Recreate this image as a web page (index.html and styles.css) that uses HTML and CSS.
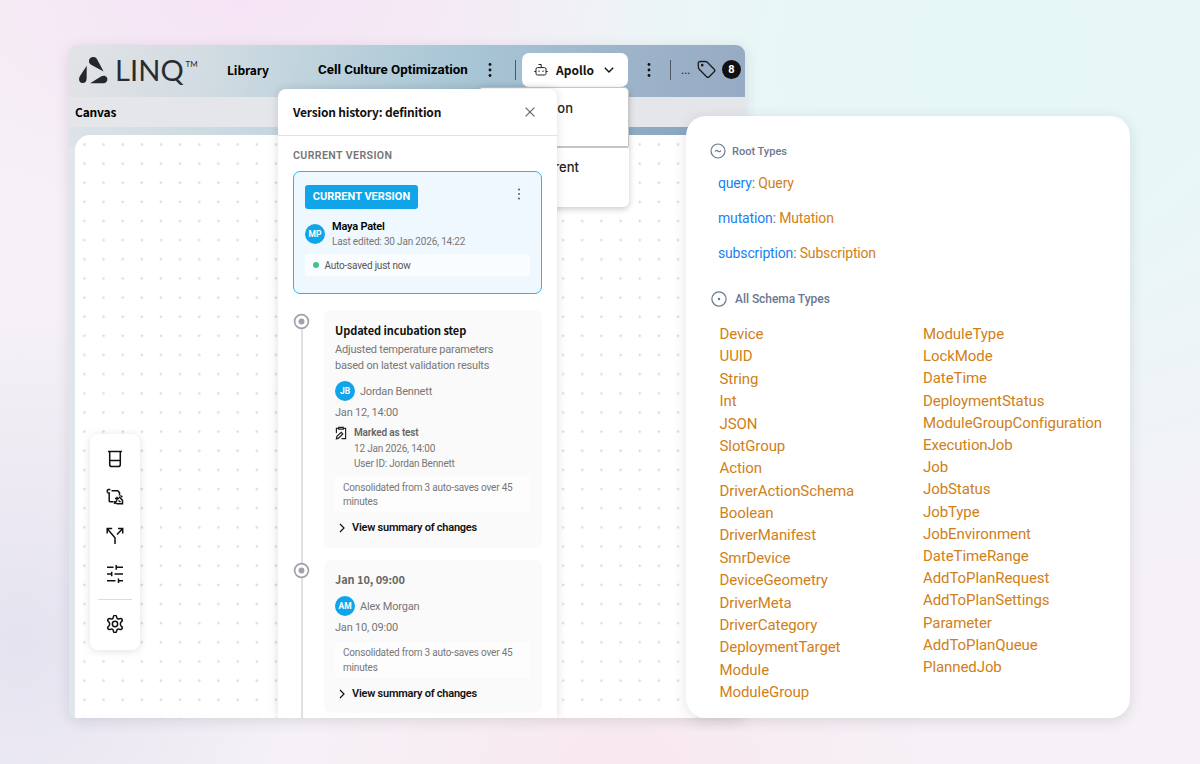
FILE: index.html
```html
<!DOCTYPE html>
<html lang="en">
<head>
<meta charset="utf-8">
<title>LINQ</title>
<link rel="stylesheet" href="styles.css">
</head>
<body>
<main class="stage">
  <section class="app">
    <header class="topbar">
      <svg class="logo-mark" viewBox="0 0 32 30" fill="#25282a"><path d="M10.300 4.500C10.500 1.500 13 .3 15.200.6c2 .3 3.200 1.400 4 3.300l6.200 11.600L12.500 8.500c-1.600-.9-2.400-2.300-2.200-4z"/><path d="M8 9.500l-.1 13.200c-.1 3-1.600 4.900-4.200 4.800C1.200 27.400-.1 25.300.1 23c.1-1.300.8-2.500 1.600-3.800z"/><path d="M11.500 27.700l11.200-6.900c2.200-1.300 4.900-1 6.100 1 1.300 2.300 0 5.600-3.200 5.900z"/></svg>
      <span class="logo-text">LINQ</span><span class="tm">TM</span>
      <span class="nav-library">Library</span>
      <span class="nav-title">Cell Culture Optimization</span>
      <svg class="kebab" viewBox="0 0 4 16"><circle cx="2" cy="2.500" r="1.400"/><circle cx="2" cy="8" r="1.400"/><circle cx="2" cy="13.500" r="1.400"/></svg>
      <i class="rule rule-a"></i>
      <button class="workcell">
        <svg viewBox="0 0 14 14" fill="none" stroke="#222" stroke-width="1"><path d="M4.500 1.500h2.700v3"/><rect x="2" y="4.600" width="10" height="7.400" rx="1.500"/><path d="M.3 8.500H2M12 8.500h1.700M5 7.500v1.500M9 7.500v1.500"/></svg>
        <span>Apollo</span>
        <svg class="chev" viewBox="0 0 10 6" fill="none" stroke="#111" stroke-width="1.400"><path d="M.8.8 5 5 9.200.8"/></svg>
      </button>
      <svg class="kebab kebab-b" viewBox="0 0 4 16"><circle cx="2" cy="2.500" r="1.400"/><circle cx="2" cy="8" r="1.400"/><circle cx="2" cy="13.500" r="1.400"/></svg>
      <i class="rule rule-b"></i>
      <span class="dots">...</span>
      <svg class="tag" viewBox="0 0 19 19" fill="none" stroke="#1a1a1a" stroke-width="1.300" stroke-linejoin="round"><path d="M1.200 3.600c0-1.500.8-2.300 2.200-2.300l5.200.2c.8 0 1.200.2 1.700.7l6.900 7c.9.9.9 1.700 0 2.600l-5 4.900c-.9.9-1.700.9-2.600 0L2.200 9.300c-.5-.5-.7-.9-.7-1.600z"/><circle cx="5.200" cy="5.200" r=".7" fill="#1a1a1a"/></svg>
      <span class="count">8</span>
    </header>
    <div class="subbar">Canvas</div>
    <div class="canvas">
      <svg class="grid" width="100%" height="100%"><defs><pattern id="plus" width="19.150" height="19.150" patternUnits="userSpaceOnUse"><path d="M8 9.400h2.800M9.400 8v2.800" stroke="#d3d3d3" stroke-width=".9"/></pattern></defs><rect width="100%" height="100%" fill="url(#plus)"/></svg>
    </div>
  </section>

  <nav class="tools">
    <svg viewBox="0 0 18 18"><path d="M2 1.500h14M3.700 2v12.400c0 1.400.8 2.200 2.200 2.200h6.200c1.400 0 2.200-.8 2.200-2.200V2M3.700 10.500h10.600"/></svg>
    <svg viewBox="0 0 18 18"><path d="M1.300 4.600V2.800c0-.8.5-1.300 1.300-1.300h1.800M5.500 2.800h6.200l1.800 1.800v2.900M1.500 5h1.700v7.700c0 .7.400 1.100 1.100 1.100h3.200M9 10.500h4M11 8.700v3.500M8 15.800l3-3.200M8.200 13.200l2.500 2.800M13 8.700l3.500 3.500v3.600H11M14.500 7.500l1.800 1.800M12.500 12.500l2 1.500"/></svg>
    <svg viewBox="0 0 18 18"><path d="M9 17v-6.300L1.500 2M1.200 6.500V1.400h5M11 7.400l5.500-5.700M12 1.400h4.700v5"/></svg>
    <svg viewBox="0 0 18 18"><path d="M1 2.300h6.500M10.200 2.300H17M10.200 0v4.700M1 9h4.500M8.500 9H17M5.700 6.700v4.600M1 15.700h8.500M12.500 15.700H17M12.500 13.400V18"/></svg>
    <hr>
    <svg class="gear" viewBox="1.200 1.200 15.600 15.600"><path d="M7.500 3.200c.3-2.400 2.700-2.400 3 0 .2 1.200 1.200 1.800 2.300 1.300 2.200-.9 3.500 1.200 1.600 2.600-1 .8-1 3 0 3.800 1.900 1.400.6 3.500-1.600 2.600-1.100-.5-2.100.1-2.300 1.300-.3 2.400-2.700 2.400-3 0-.2-1.200-1.200-1.800-2.300-1.300-2.200.9-3.500-1.200-1.600-2.600 1-.8 1-3 0-3.800-1.900-1.400-.6-3.500 1.600-2.600 1.100.5 2.100-.1 2.300-1.300z"/><circle cx="9" cy="9" r="2.300"/></svg>
  </nav>

  <div class="dropdown"><div class="option option-on"><span>Simulation</span></div><div class="option"><span>Current</span></div></div>

  <aside class="history">
    <div class="history-head"><span>Version history: definition</span><svg viewBox="0 0 10 10" stroke="#666" stroke-width="1.200"><path d="M.6.6l8.800 8.800M9.400.6.6 9.400"/></svg></div>
    <div class="history-body">
      <div class="eyebrow">CURRENT VERSION</div>
      <article class="current">
        <div class="current-top"><span class="badge">CURRENT VERSION</span><svg viewBox="0 0 4 12" fill="#666"><circle cx="2" cy="1.500" r="1.100"/><circle cx="2" cy="6" r="1.100"/><circle cx="2" cy="10.500" r="1.100"/></svg></div>
        <div class="editor"><span class="avatar">MP</span><div><div class="name">Maya Patel</div><div class="edited">Last edited: 30 Jan 2026, 14:22</div></div></div>
        <div class="saved"><i></i>Auto-saved just now</div>
      </article>
      <div class="timeline">
        <div class="entry">
          <div class="rail"><svg viewBox="0 0 16 16"><circle cx="8" cy="8" r="6.500" fill="#fff" stroke="#a0a1aa" stroke-width="1.600"/><circle cx="8" cy="8" r="2.800" fill="#a0a1aa"/></svg></div>
          <article class="version">
            <h3>Updated incubation step</h3>
            <p class="desc">Adjusted temperature parameters<br>based on latest validation results</p>
            <div class="author"><span class="avatar">JB</span>Jordan Bennett</div>
            <div class="date">Jan 12, 14:00</div>
            <div class="mark"><svg viewBox="0 0 12 14" fill="none" stroke="#222" stroke-width="1.200"><path d="M3.500 2.300H1.400V7M8.500 2.300h2.100v10.400H6.500M3.700 1.300h4.600v1.900H3.700zM1.400 12.800l.5-2.600 4.300-3.900 1.600 1.600-4.200 4.200z"/></svg><b>Marked as test</b></div>
            <div class="mark-info">12 Jan 2026, 14:00<br>User ID: Jordan Bennett</div>
            <div class="note">Consolidated from 3 auto-saves over 45<br>minutes</div>
            <div class="summary"><svg viewBox="0 0 6 10"><path d="M1 1l4 4-4 4"/></svg>View summary of changes</div>
          </article>
        </div>
        <div class="entry">
          <div class="rail"><svg viewBox="0 0 16 16"><circle cx="8" cy="8" r="6.500" fill="#fff" stroke="#a0a1aa" stroke-width="1.600"/><circle cx="8" cy="8" r="2.800" fill="#a0a1aa"/></svg></div>
          <article class="version version-auto">
            <h3>Jan 10, 09:00</h3>
            <div class="author"><span class="avatar">AM</span>Alex Morgan</div>
            <div class="date">Jan 10, 09:00</div>
            <div class="note">Consolidated from 3 auto-saves over 45<br>minutes</div>
            <div class="summary"><svg viewBox="0 0 6 10"><path d="M1 1l4 4-4 4"/></svg>View summary of changes</div>
          </article>
        </div>
      </div>
    </div>
  </aside>

  <section class="schema">
    <h2 class="root-head"><svg viewBox="0 0 16 16"><circle cx="8" cy="8" r="7"/><path d="M5.200 8.700C5.700 7 7 7 8 8s2.300 1 2.800-.7"/></svg>Root Types</h2>
    <div class="roots">
      <div><b>query</b>: <em>Query</em></div>
      <div><b>mutation</b>: <em>Mutation</em></div>
      <div><b>subscription</b>: <em>Subscription</em></div>
    </div>
    <h2 class="all-head"><svg viewBox="0 0 16 16"><circle cx="8" cy="8" r="7.100"/><circle cx="8" cy="8" r=".6" fill="#6b7890"/></svg>All Schema Types</h2>
    <div class="types">
      <ul class="types-a"><li>Device</li><li>UUID</li><li>String</li><li>Int</li><li>JSON</li><li>SlotGroup</li><li>Action</li><li>DriverActionSchema</li><li>Boolean</li><li>DriverManifest</li><li>SmrDevice</li><li>DeviceGeometry</li><li>DriverMeta</li><li>DriverCategory</li><li>DeploymentTarget</li><li>Module</li><li>ModuleGroup</li></ul>
      <ul class="types-b"><li>ModuleType</li><li>LockMode</li><li>DateTime</li><li>DeploymentStatus</li><li>ModuleGroupConfiguration</li><li>ExecutionJob</li><li>Job</li><li>JobStatus</li><li>JobType</li><li>JobEnvironment</li><li>DateTimeRange</li><li>AddToPlanRequest</li><li>AddToPlanSettings</li><li>Parameter</li><li>AddToPlanQueue</li><li>PlannedJob</li></ul>
    </div>
  </section>
</main>
</body>
</html>
```
FILE: styles.css
```css
* { box-sizing: border-box; }
body { margin: 0; font-family: Roboto, "Liberation Sans", sans-serif; color: #111; }
h2, h3, p, ul { margin: 0; padding: 0; }
ul { list-style: none; }
svg { flex: none; display: block; }
.stage {
  position: relative; width: 1200px; height: 764px; overflow: hidden;
  background:
    radial-gradient(ellipse 420px 220px at 240px 0, #f5e4f5 0, rgba(245,228,245,0) 100%),
    radial-gradient(ellipse 620px 520px at 1000px 60px, #e5f7f6 0, #e7f7f6 30%, rgba(231,246,247,0) 100%),
    radial-gradient(ellipse 320px 160px at 620px 764px, #f9e8ef 0, rgba(249,232,239,0) 100%),
    radial-gradient(ellipse 280px 330px at 20px 640px, #e5e3f0 0, rgba(229,227,240,0) 100%),
    #f5f1f6;
}

/* Application window */
.app {
  position: absolute; left: 69px; top: 45px; width: 676px; height: 673px;
  display: flex; flex-direction: column; border-radius: 9px;
  background: linear-gradient(#dfe5eb, #e1e6ed);
  box-shadow: 0 3px 14px rgba(40,40,70,.13);
}
.topbar {
  height: 52px; display: flex; align-items: center; padding: 0 0 3px 10px; border-radius: 9px 9px 0 0;
  background: linear-gradient(102deg, #e2e3e7 0, #d2dce2 20%, #bfd3dd 36%, #a8c6d5 58%, #9db5cb 80%, #97aac4 100%);
}
.logo-mark { width: 31px; height: 30px; margin-top: 2px; }
.logo-text { font: 400 29px/30px Lato, sans-serif; color: #292c2e; margin-left: 5px; width: 71px; letter-spacing: .1px; }
.tm { font: 400 8px/10px Lato, sans-serif; width: 13px; margin-top: -12px; margin-left: -.500px; margin-right: .500px; color: #292c2e; }
.nav-library { font: 700 12px/18px "Noto Sans CJK SC", sans-serif; letter-spacing: -.1px; margin-left: 28px; width: 91px; color: #000; }
.nav-title { font-size: 13.300px; font-weight: 700; width: 150px; white-space: nowrap; color: #000; }
.kebab { width: 4px; height: 16px; margin-left: 20px; fill: #111; }
.rule { width: 1px; height: 20px; background: #4d5963; }
.rule-a { margin-left: 23px; }
.rule-b { margin-left: 19px; }
.workcell {
  width: 106px; height: 34px; margin: 1px 0 0 6px; padding: 0 13px 0 12px; display: flex; align-items: center;
  border: 0; border-radius: 7px; background: #fff; font: 700 12px/18px "Noto Sans CJK SC", sans-serif; color: #111;
}
.workcell svg { width: 14px; height: 14px; }
.workcell span { margin-left: 8px; width: 38px; text-align: left; }
.workcell .chev { width: 10px; height: 6px; margin-left: 10px; }
.kebab-b { margin-left: 19px; }
.dots { margin-left: 10px; width: 16px; font-size: 12px; color: #222; }
.tag { width: 19px; height: 19px; }
.count { margin-left: 6px; width: 19px; height: 19px; border-radius: 50%; background: #111; color: #fff; font-size: 11px; font-weight: 700; line-height: 19px; text-align: center; }
.subbar { height: 30px; padding-left: 6px; background: #e5e6ea; font: 700 12px/29px "Noto Sans CJK SC", sans-serif; letter-spacing: -.2px; color: #000; }
.canvas {
  flex: 1; padding-left: 6px; padding-top: 8px; border-radius: 0 0 0 8px; overflow: hidden;
  background: linear-gradient(90deg, #dce3e9 0, #c5d6df 30%, #9cbacd 60%, #87a2bd 100%) 0 0 / 100% 20px no-repeat, #e1e6ed;
}
.grid { background: #fff; border-radius: 15px 0 0 0; }

.tools {
  position: absolute; left: 90px; top: 434px; width: 50px; height: 216px; padding: 16px 8px 0;
  display: flex; flex-direction: column; align-items: center; gap: 20.300px;
  background: #fff; border-radius: 8px; box-shadow: 0 1px 8px rgba(0,0,0,.12);
}
.tools svg { width: 18px; height: 18px; fill: none; stroke: #111; stroke-width: 1.500; }
.tools .gear { stroke-width: 1.300; }
.tools hr { width: 34px; height: 1px; margin: -4px 0 -5px; border: 0; background: #ddd; }

.dropdown {
  position: absolute; left: 478px; top: 87px; width: 151px; height: 120px;
  background: #fff; border-radius: 6px; box-shadow: 0 2px 6px rgba(0,0,0,.22);
}
.option { height: 59px; padding: 9px 0 0 9px; font: 500 13px/20px Inter, sans-serif; color: #222; }
.option span { display: block; width: 86px; text-align: right; }
.option-on { height: 61px; border: 1px solid #c5c5c9; border-bottom-width: 2px; border-radius: 5px 5px 2px 2px; padding: 10px 0 0 8px; }
.option:last-child span { width: 92px; }

/* Version history */
.history {
  position: absolute; left: 278px; top: 89px; width: 279px; height: 629px; overflow: hidden;
  background: #fff; border-radius: 8px 8px 0 0; box-shadow: 0 0 10px rgba(0,0,0,.14); clip-path: inset(-12px -12px 0 -12px);
}
.history-head {
  height: 47px; padding: 0 22px 0 15px; display: flex; align-items: center; justify-content: space-between;
  border-bottom: 1px solid #e1e2e4; font: 700 12px/20px "Noto Sans CJK SC", sans-serif; letter-spacing: -.18px;
}
.history-head span { margin-top: -1px; }
.history-head svg { width: 10px; height: 10px; }
.history-body { padding: 12px 15px 0; }
.eyebrow { height: 15px; font-size: 10.600px; font-weight: 600; line-height: 15px; color: #757575; letter-spacing: .4px; }
.current { height: 123px; margin-top: 8px; padding: 13px 11px; border: 1px solid #38aee8; border-radius: 7px; background: #f0f8ff; }
.current-top { display: flex; justify-content: space-between; height: 24px; padding-right: 9px; }
.current-top svg { width: 4px; height: 12px; margin-top: 3px; }
.badge { width: 113px; height: 24px; border-radius: 3px; background: #10a5e9; color: #fff; font-size: 11px; font-weight: 700; line-height: 24px; text-align: center; }
.editor { display: flex; gap: 7px; margin-top: 10px; align-items: center; height: 30px; font-size: 11px; line-height: 15px; }
.avatar { flex: none; width: 20px; height: 20px; border-radius: 50%; background: #10a5e9; color: #fff; font-size: 8.500px; font-weight: 700; line-height: 20px; text-align: center; }
.name { font-weight: 600; color: #000; letter-spacing: -.220px; }
.edited { font-size: 10px; letter-spacing: -.180px; color: #777; }
.saved { height: 22px; margin-top: 5px; padding-left: 8px; display: flex; align-items: center; gap: 5.500px; border-radius: 3px; background: #fafdff; font-size: 10px; letter-spacing: -.200px; color: #555; }
.saved i { width: 6px; height: 6px; border-radius: 50%; background: #43c38b; }
.timeline { margin-top: 16px; }
.entry { display: flex; }
.rail { width: 17px; margin-right: 14px; padding-top: 2.500px; background: linear-gradient(#e0e0e3, #e0e0e3) 8px 0 / 2px 100% no-repeat; }
.entry:first-child .rail { background-position: 8px 12px; }
.rail svg { width: 17px; height: 17px; }
.version { width: 218px; height: 238px; padding: 12px 12px 0 11px; margin-bottom: 11.500px; border-radius: 7px; background: #fafafa; color: #777; }
.version-auto { height: 153px; padding-top: 11.500px; }
.version h3 { font: 700 11px/16px "Noto Sans CJK SC", sans-serif; letter-spacing: -.08px; color: #111; }
.version-auto h3 { color: #666; }
.desc { margin-top: 4px; font-size: 11px; letter-spacing: -.200px; line-height: 15.500px; }
.author { margin-top: 8px; height: 20px; display: flex; align-items: center; gap: 5px; font-size: 11px; letter-spacing: -.200px; }
.author .avatar, .editor .avatar { letter-spacing: 0; }
.version-auto .author { margin-top: 9px; }
.date { margin-top: 5px; font-size: 11px; letter-spacing: -.200px; line-height: 14px; }
.mark { display: flex; gap: 7px; margin-top: 6px; height: 14px; font-size: 10px; letter-spacing: -.150px; line-height: 14px; color: #666; }
.mark b { font-weight: 600; }
.mark svg { width: 12px; height: 14px; }
.mark-info { margin-top: 2px; padding-left: 19px; font-size: 10px; letter-spacing: -.190px; line-height: 14.500px; }
.note { margin-top: 5px; height: 36px; padding: 4.500px 8px; font-size: 10px; letter-spacing: -.190px; line-height: 14.500px; white-space: nowrap; border-radius: 3px; background: #fdfdfd; }
.version-auto .note { margin-top: 6.500px; }
.summary { margin-top: 8px; display: flex; align-items: center; gap: 7px; padding-left: 4px; font-size: 11px; letter-spacing: -.240px; line-height: 16px; font-weight: 600; color: #111; }
.summary svg { width: 6px; height: 10px; fill: none; stroke: #111; stroke-width: 1.200; }

/* Schema card */
.schema {
  position: absolute; left: 686px; top: 116px; width: 444px; height: 602px; padding: 27px 24px 0;
  background: #fff; border-radius: 20px; box-shadow: 0 3px 14px rgba(40,40,60,.13); color: #6b7890;
}
.schema h2 { display: flex; align-items: center; height: 16px; font-size: 11px; font-weight: 500; white-space: nowrap; }
.schema h2 svg { width: 16px; height: 16px; fill: none; stroke: #6b7890; stroke-width: 1.200; }
.root-head { gap: 6px; }
.roots { padding: 7px 0 0 8px; font-size: 14px; letter-spacing: -.160px; line-height: 35px; }
.roots b { font-weight: 400; color: #1b7ff0; }
.roots em { font-style: normal; color: #d08018; }
.schema .all-head { margin-top: 20px; gap: 8px; padding-left: 1px; font-size: 12px; letter-spacing: -.040px; }
.types { display: flex; padding: 16px 0 0 9.500px; font-size: 15px; letter-spacing: -.080px; color: #d08018; }
.types-a { width: 203.500px; line-height: 22.370px; }
.types-b { line-height: 22.200px; }
```
